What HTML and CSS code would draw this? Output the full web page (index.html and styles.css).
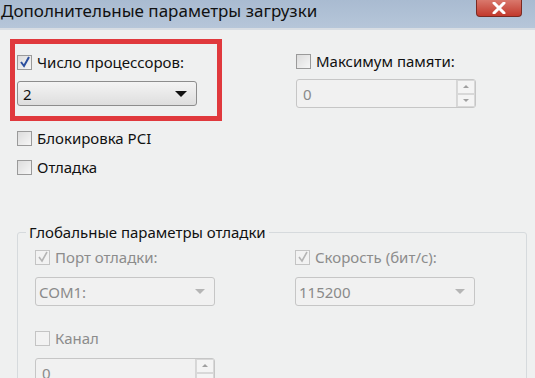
FILE: index.html
```html
<!DOCTYPE html>
<html lang="ru">
<head>
    <meta charset="UTF-8">
    <title>Дополнительные параметры загрузки</title>
    <link rel="stylesheet" href="styles.css">
</head>
<body>
    <div class="window">
        <div class="titlebar">
            <span class="title">Дополнительные параметры загрузки</span>
            <div class="close-btn">
                <svg width="14" height="12" viewBox="0 0 14 12">
                    <path d="M2 1 L12 11 M12 1 L2 11" stroke="#fff" stroke-width="3" stroke-linecap="round"/>
                </svg>
            </div>
        </div>

        <div class="content">
            <div class="top-row">
                <div class="highlight">
                    <label class="check-row">
                        <span class="checkbox checked">
                            <svg width="12" height="12" viewBox="0 0 12 12"><path d="M2 6 L5 10 L10 1" stroke="#2b4f9e" stroke-width="2" fill="none"/></svg>
                        </span>
                        <span>Число процессоров:</span>
                    </label>
                    <div class="combo">
                        <span>2</span>
                        <span class="combo-arrow"></span>
                    </div>
                </div>
                <div class="right-col">
                    <label class="check-row">
                        <span class="checkbox"></span>
                        <span>Максимум памяти:</span>
                    </label>
                    <div class="spin disabled">
                        <span>0</span>
                        <div class="spin-btns">
                            <span class="spin-up"></span>
                            <span class="spin-down"></span>
                        </div>
                    </div>
                </div>
            </div>

            <div class="options">
                <label class="check-row">
                    <span class="checkbox"></span>
                    <span>Блокировка PCI</span>
                </label>
                <label class="check-row">
                    <span class="checkbox"></span>
                    <span>Отладка</span>
                </label>
            </div>

            <fieldset class="group">
                <legend>Глобальные параметры отладки</legend>
                <div class="group-grid">
                    <div class="group-col">
                        <label class="check-row disabled">
                            <span class="checkbox checked">
                                <svg width="12" height="12" viewBox="0 0 12 12"><path d="M2 6 L5 10 L10 1" stroke="#b4b4b4" stroke-width="1.6" fill="none"/></svg>
                            </span>
                            <span>Порт отладки:</span>
                        </label>
                        <div class="combo disabled">
                            <span>COM1:</span>
                            <span class="combo-arrow"></span>
                        </div>
                        <label class="check-row disabled channel">
                            <span class="checkbox"></span>
                            <span>Канал</span>
                        </label>
                        <div class="spin disabled">
                            <span>0</span>
                            <div class="spin-btns">
                                <span class="spin-up"></span>
                                <span class="spin-down"></span>
                            </div>
                        </div>
                    </div>
                    <div class="group-col">
                        <label class="check-row disabled">
                            <span class="checkbox checked">
                                <svg width="12" height="12" viewBox="0 0 12 12"><path d="M2 6 L5 10 L10 1" stroke="#b4b4b4" stroke-width="1.6" fill="none"/></svg>
                            </span>
                            <span>Скорость (бит/с):</span>
                        </label>
                        <div class="combo disabled">
                            <span>115200</span>
                            <span class="combo-arrow"></span>
                        </div>
                    </div>
                </div>
            </fieldset>
        </div>
    </div>
</body>
</html>
```

FILE: styles.css
```css
body {
    margin: 0;
    background-color: #eff0f0;
    font-family: 'Noto Sans', 'Open Sans', sans-serif;
    overflow: hidden;
}

.window {
    width: 535px;
    height: 378px;
    overflow: hidden;
    background-color: #eff0f0;
}

.titlebar {
    height: 28px;
    display: flex;
    justify-content: space-between;
    align-items: flex-start;
    background: linear-gradient(to bottom, #a9bbd1, #b6c6d9);
    border-bottom: 2px solid #d8dde3;
}

.title {
    font-size: 17px;
    color: #111;
    padding-left: 1px;
    line-height: 22px;
}

.close-btn {
    width: 44px;
    height: 16px;
    margin-right: 13px;
    background: linear-gradient(to bottom, #d9786c, #c2392c);
    border: 1px solid #7a2a22;
    border-top: none;
    border-radius: 0 0 4px 4px;
    display: flex;
    align-items: center;
    justify-content: center;
}

.content {
    padding: 9px 8px 0 10px;
}

.top-row {
    display: flex;
}

.highlight {
    width: 200px;
    border: 5px solid #e0393d;
    padding: 9px 0 10px 2px;
    display: flex;
    flex-direction: column;
    gap: 10px;
}

.right-col {
    margin-left: 74px;
    padding-top: 13px;
    display: flex;
    flex-direction: column;
    gap: 9px;
}

.check-row {
    display: flex;
    align-items: center;
    gap: 5px;
    font-size: 15px;
    color: #111;
    height: 18px;
}

.check-row.disabled {
    color: #8c8c8c;
}

.checkbox {
    width: 15px;
    height: 15px;
    box-sizing: border-box;
    border: 1px solid #9a9a9a;
    background: linear-gradient(135deg, #dcdcdc, #f6f6f6);
    display: flex;
    align-items: center;
    justify-content: center;
}

.check-row.disabled .checkbox {
    border-color: #c4c4c4;
    background: #f2f2f2;
}

.combo {
    width: 180px;
    height: 25px;
    box-sizing: border-box;
    border: 1px solid #8d8d8d;
    border-radius: 3px;
    background: linear-gradient(to bottom, #f4f4f4, #dedede);
    display: flex;
    align-items: center;
    justify-content: space-between;
    padding: 0 9px 0 5px;
    font-size: 15px;
    color: #111;
}

.combo-arrow {
    width: 0;
    height: 0;
    border-left: 6px solid transparent;
    border-right: 6px solid transparent;
    border-top: 6px solid #111;
}

.combo.disabled {
    height: 29px;
    border-color: #c6c6c6;
    background: #f1f1f1;
    color: #8a8a8a;
    padding-left: 3px;
}

.combo.disabled .combo-arrow {
    border-top-color: #b5b5b5;
    border-left-width: 5px;
    border-right-width: 5px;
    border-top-width: 5px;
}

.spin {
    width: 180px;
    height: 29px;
    box-sizing: border-box;
    border: 1px solid #c6c6c6;
    border-radius: 3px;
    background: #f1f1f1;
    display: flex;
    align-items: center;
    justify-content: space-between;
    padding: 0 0 0 6px;
    font-size: 15px;
    color: #8a8a8a;
    flex-shrink: 0;
}

.spin-btns {
    width: 18px;
    height: 27px;
    display: flex;
    flex-direction: column;
    border-left: 1px solid #d6d6d6;
}

.spin-up,
.spin-down {
    flex: 1;
    display: flex;
    align-items: center;
    justify-content: center;
    border: 1px solid #d8d8d8;
    background: #f4f4f4;
}

.spin-up::after {
    content: '';
    border-left: 3px solid transparent;
    border-right: 3px solid transparent;
    border-bottom: 3px solid #a0a0a0;
}

.spin-down::after {
    content: '';
    border-left: 3px solid transparent;
    border-right: 3px solid transparent;
    border-top: 3px solid #a0a0a0;
}

.options {
    margin-top: 8px;
    padding-left: 7px;
    display: flex;
    flex-direction: column;
    gap: 11px;
}

.group {
    margin: 46px 0 0 7px;
    width: 510px;
    box-sizing: border-box;
    border: 1px solid #d6dadd;
    border-radius: 3px;
    padding: 6px 0 0 17px;
    height: 200px;
}

.group legend {
    font-size: 15px;
    color: #111;
    padding: 0 3px;
    margin-left: -9px;
}

.group-grid {
    display: flex;
    gap: 82px;
}

.group-col {
    display: flex;
    flex-direction: column;
    gap: 11px;
    width: 178px;
}

.check-row.channel {
    margin-top: 12px;
}
```
